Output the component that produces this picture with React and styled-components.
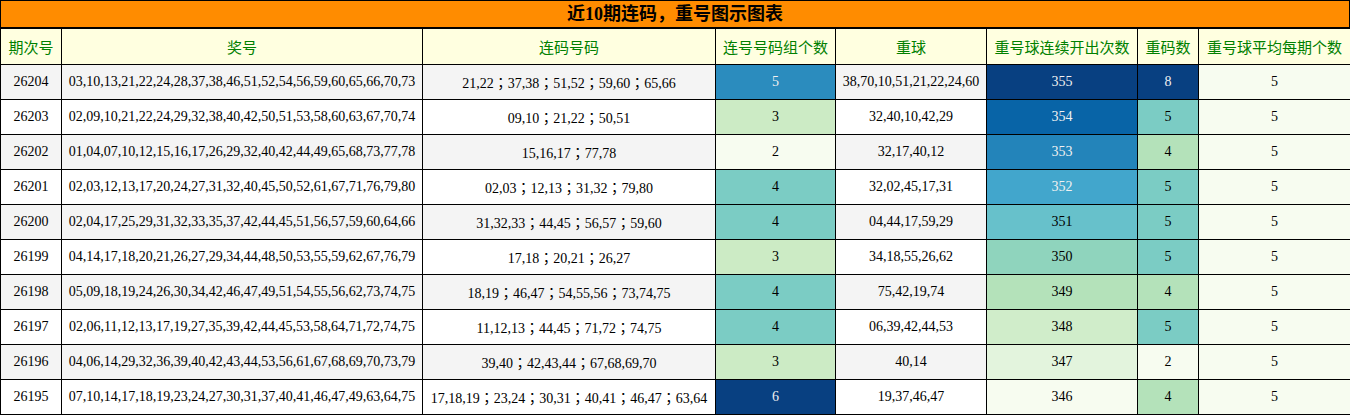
import React from 'react';
import styled, { createGlobalStyle } from 'styled-components';

const GlobalStyle = createGlobalStyle`
  body {
    margin: 0;
    background: #fff;
    font-family: "Liberation Serif", "Noto Sans CJK SC", serif;
  }
`;

const Wrap = styled.div`
  width: 1350px;
  box-sizing: border-box;
`;

const Title = styled.div`
  height: 26px;
  line-height: 26px;
  background-color: #ff8c00;
  border: 1px solid #000;
  text-align: center;
  font-size: 18px;
  font-weight: bold;
  color: #000;
  font-family: "Liberation Serif", "Noto Sans CJK SC", serif;
`;

const Table = styled.table`
  width: 1350px;
  border-collapse: collapse;
  table-layout: fixed;
  border: 1px solid #000;
`;

const Head = styled.th`
  height: 35px;
  padding: 0;
  background-color: #ffffe0;
  color: #008000;
  font-family: "Noto Sans CJK SC", sans-serif;
  font-size: 15px;
  font-weight: normal;
  text-align: center;
  border: 1px solid #000;
  white-space: nowrap;
`;

const Row = styled.tr`
  background-color: ${(p) => (p.$odd ? '#f4f4f4' : '#ffffff')};
`;

const Cell = styled.td`
  height: 34px;
  padding: 0;
  text-align: center;
  font-family: "Liberation Serif", "Noto Sans CJK TC", serif;
  font-size: 14px;
  color: #000;
  border: 1px solid #000;
  white-space: nowrap;
`;

const ColorCell = styled(Cell)`
  color: ${(p) => (p.$light ? '#f1f1f1' : '#000')};
`;

const GNBU = ['#f7fcf0', '#e0f3db', '#ccebc5', '#a8ddb5', '#7bccc4', '#4eb3d3', '#2b8cbe', '#0868ac', '#084081'];

const hex = (h) => [1, 3, 5].map((i) => parseInt(h.slice(i, i + 2), 16));

function gnbu(t) {
  const x = Math.max(0, Math.min(1, t)) * (GNBU.length - 1);
  const i = Math.min(Math.floor(x), GNBU.length - 2);
  const f = x - i;
  const a = hex(GNBU[i]);
  const b = hex(GNBU[i + 1]);
  return a.map((v, k) => Math.round(v + (b[k] - v) * f));
}

function luminance(rgb) {
  const c = rgb.map((v) => {
    const s = v / 255;
    return s <= 0.03928 ? s / 12.92 : Math.pow((s + 0.055) / 1.055, 2.4);
  });
  return 0.2126 * c[0] + 0.7152 * c[1] + 0.0722 * c[2];
}

const rows = [
  ['26204', '03,10,13,21,22,24,28,37,38,46,51,52,54,56,59,60,65,66,70,73', '21,22；37,38；51,52；59,60；65,66', 5, '38,70,10,51,21,22,24,60', 355, 8, 5],
  ['26203', '02,09,10,21,22,24,29,32,38,40,42,50,51,53,58,60,63,67,70,74', '09,10；21,22；50,51', 3, '32,40,10,42,29', 354, 5, 5],
  ['26202', '01,04,07,10,12,15,16,17,26,29,32,40,42,44,49,65,68,73,77,78', '15,16,17；77,78', 2, '32,17,40,12', 353, 4, 5],
  ['26201', '02,03,12,13,17,20,24,27,31,32,40,45,50,52,61,67,71,76,79,80', '02,03；12,13；31,32；79,80', 4, '32,02,45,17,31', 352, 5, 5],
  ['26200', '02,04,17,25,29,31,32,33,35,37,42,44,45,51,56,57,59,60,64,66', '31,32,33；44,45；56,57；59,60', 4, '04,44,17,59,29', 351, 5, 5],
  ['26199', '04,14,17,18,20,21,26,27,29,34,44,48,50,53,55,59,62,67,76,79', '17,18；20,21；26,27', 3, '34,18,55,26,62', 350, 5, 5],
  ['26198', '05,09,18,19,24,26,30,34,42,46,47,49,51,54,55,56,62,73,74,75', '18,19；46,47；54,55,56；73,74,75', 4, '75,42,19,74', 349, 4, 5],
  ['26197', '02,06,11,12,13,17,19,27,35,39,42,44,45,53,58,64,71,72,74,75', '11,12,13；44,45；71,72；74,75', 4, '06,39,42,44,53', 348, 5, 5],
  ['26196', '04,06,14,29,32,36,39,40,42,43,44,53,56,61,67,68,69,70,73,79', '39,40；42,43,44；67,68,69,70', 3, '40,14', 347, 2, 5],
  ['26195', '07,10,14,17,18,19,23,24,27,30,31,37,40,41,46,47,49,63,64,75', '17,18,19；23,24；30,31；40,41；46,47；63,64', 6, '19,37,46,47', 346, 4, 5],
];

const heads = [
  ['期次号', 61],
  ['奖号', 361],
  ['连码号码', 293],
  ['连号号码组个数', 120],
  ['重球', 151],
  ['重号球连续开出次数', 151],
  ['重码数', 61],
  ['重号球平均每期个数', 152],
];

const gradientCols = [3, 5, 6, 7];

const ranges = gradientCols.reduce((acc, c) => {
  const vals = rows.map((r) => r[c]);
  acc[c] = [Math.min(...vals), Math.max(...vals)];
  return acc;
}, {});

function Shaded({ col, value }) {
  const [lo, hi] = ranges[col];
  const t = hi === lo ? 0 : (value - lo) / (hi - lo);
  const rgb = gnbu(t);
  return (
    <ColorCell $light={luminance(rgb) < 0.408} style={{ backgroundColor: `rgb(${rgb.join(',')})` }}>
      {value}
    </ColorCell>
  );
}

export default function App() {
  return (
    <Wrap>
      <GlobalStyle />
      <Title>近10期连码，重号图示图表</Title>
      <Table>
        <colgroup>
          {heads.map(([h, w]) => (
            <col key={h} style={{ width: w }} />
          ))}
        </colgroup>
        <thead>
          <tr>
            {heads.map(([h]) => (
              <Head key={h}>{h}</Head>
            ))}
          </tr>
        </thead>
        <tbody>
          {rows.map((r, i) => (
            <Row key={r[0]} $odd={i % 2 === 0}>
              {r.map((v, c) =>
                gradientCols.includes(c) ? <Shaded key={c} col={c} value={v} /> : <Cell key={c}>{v}</Cell>
              )}
            </Row>
          ))}
        </tbody>
      </Table>
    </Wrap>
  );
}
